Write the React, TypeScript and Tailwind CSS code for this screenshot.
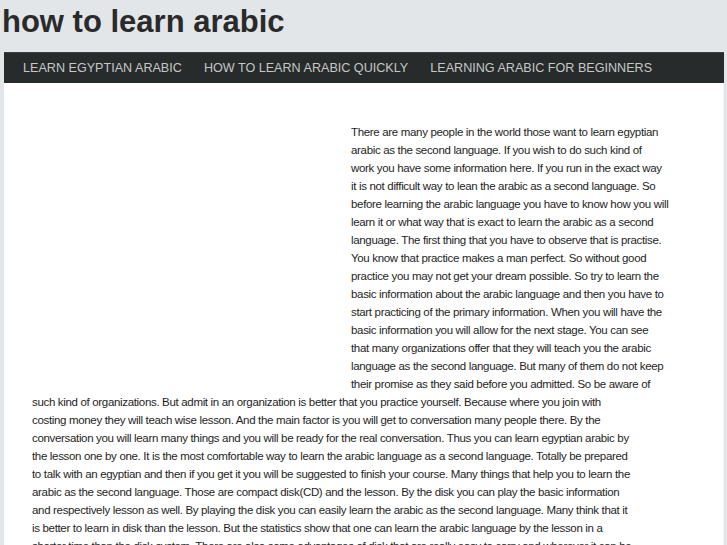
import React from "react";

const floatLines = [
  "There are many people in the world those want to learn egyptian",
  "arabic as the second language. If you wish to do such kind of",
  "work you have some information here. If you run in the exact way",
  "it is not difficult way to lean the arabic as a second language. So",
  "before learning the arabic language you have to know how you will",
  "learn it or what way that is exact to learn the arabic as a second",
  "language. The first thing that you have to observe that is practise.",
  "You know that practice makes a man perfect. So without good",
  "practice you may not get your dream possible. So try to learn the",
  "basic information about the arabic language and then you have to",
  "start practicing of the primary information. When you will have the",
  "basic information you will allow for the next stage. You can see",
  "that many organizations offer that they will teach you the arabic",
  "language as the second language. But many of them do not keep",
  "their promise as they said before you admitted. So be aware of",
];

const fullLines = [
  "such kind of organizations. But admit in an organization is better that you practice yourself. Because where you join with",
  "costing money they will teach wise lesson. And the main factor is you will get to conversation many people there. By the",
  "conversation you will learn many things and you will be ready for the real conversation. Thus you can learn egyptian arabic by",
  "the lesson one by one. It is the most comfortable way to learn the arabic language as a second language. Totally be prepared",
  "to talk with an egyptian and then if you get it you will be suggested to finish your course. Many things that help you to learn the",
  "arabic as the second language. Those are compact disk(CD) and the lesson. By the disk you can play the basic information",
  "and respectively lesson as well. By playing the disk you can easily learn the arabic as the second language. Many think that it",
  "is better to learn in disk than the lesson. But the statistics show that one can learn the arabic language by the lesson in a",
  "shorter time than the disk system. There are also some advantages of disk that are really easy to carry and wherever it can be",
];

export default function App() {
  return (
    <div
      className="h-[545px] overflow-hidden bg-[#e3e6e9]"
      style={{ fontFamily: '"Liberation Sans", Arial, sans-serif' }}
    >
      <h1 className="pl-[2px] pt-[4px] mb-[12px] text-[31px] leading-[36px] font-bold text-[#2a2a2a]">
        how to learn arabic
      </h1>
      <div className="ml-[4px] mr-[3px]">
        <nav className="h-[31px] bg-[#272b2c] flex items-center pl-[8px] border-t border-[#3a3e3f]">
          {["LEARN EGYPTIAN ARABIC", "HOW TO LEARN ARABIC QUICKLY", "LEARNING ARABIC FOR BEGINNERS"].map((t) => (
            <span key={t} className="px-[11px] text-[12.6px] text-[#c6c8c8] whitespace-nowrap">
              {t}
            </span>
          ))}
        </nav>
        <div className="bg-white border-r border-[#f4f5f6] pl-[28px] pt-[40px] h-[500px]">
          <div className="float-left w-[319px] h-[270px]" />
          <p className="text-[11.5px] leading-[18px] text-[#1e1e1e] whitespace-nowrap tracking-[-0.33px]">
            {floatLines.concat(fullLines).map((l, i) => (
              <React.Fragment key={i}>
                {l}
                <br />
              </React.Fragment>
            ))}
          </p>
        </div>
      </div>
    </div>
  );
}
